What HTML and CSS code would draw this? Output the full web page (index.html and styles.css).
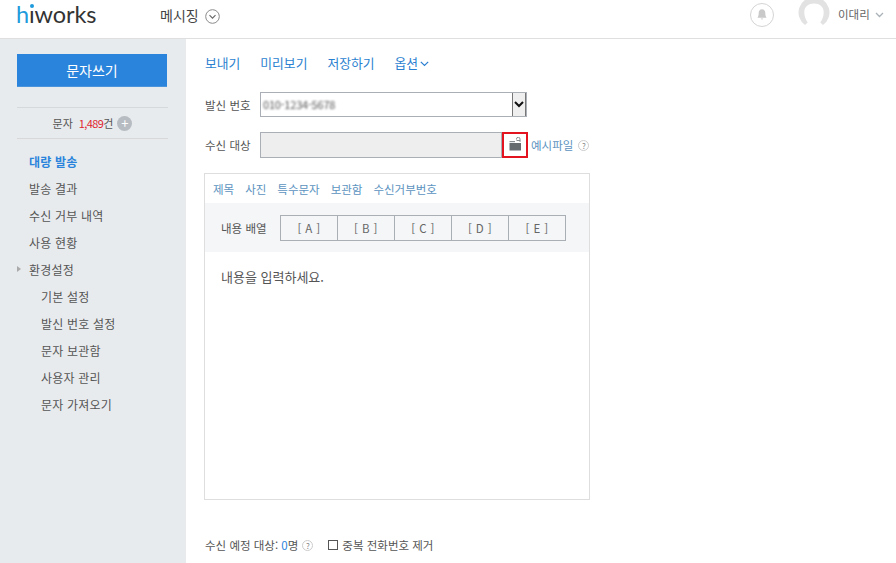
FILE: index.html
```html
<!DOCTYPE html>
<html lang="ko">
<head>
<meta charset="utf-8">
<title>hiworks 메시징</title>
<link rel="stylesheet" href="styles.css">
</head>
<body>
<header class="topbar">
  <div class="logo"><span class="logo-h">h</span><span class="logo-i">ı<i class="logo-dot"></i></span>works</div>
  <div class="app-menu">메시징
    <svg class="app-caret" width="15" height="15" viewBox="0 0 15 15"><circle cx="7.5" cy="7.5" r="6.8" fill="none" stroke="#8a8a8a"/><path d="M4.5 6.2 7.5 9.2 10.5 6.2" fill="none" stroke="#666" stroke-width="1.1"/></svg>
  </div>
  <div class="top-right">
    <span class="bell"><svg width="24" height="24" viewBox="0 0 24 24"><circle cx="12" cy="12" r="11.5" fill="#fff" stroke="#d4d4d4"/><path d="M12 6.2c-2.3 0-3.3 1.8-3.3 3.8 0 2.4-.5 3.6-1.2 4.7h9c-.7-1.100-1.200-2.300-1.200-4.700 0-2-1-3.800-3.300-3.800zM10.700 15.600a1.400 1.400 0 0 0 2.600 0z" fill="#c9c9c9"/></svg></span>
    <span class="avatar"><svg width="32" height="38" viewBox="0 0 32 38"><path d="M16 -3a15.500 15.500 0 0 1 9 28.100l-2.700-2.700c2.300-3 3.400-6.400 3.400-10.400 0-5.500-4.300-8.500-9.700-8.500s-9.700 3-9.700 8.500c0 4 1.100 7.400 3.400 10.400L7 25.100A15.500 15.500 0 0 1 16-3z" fill="#e2e2e2"/></svg></span>
    <span class="user">이대리</span>
    <svg class="user-caret" width="9" height="6" viewBox="0 0 9 6"><path d="M1 1 4.500 4.500 8 1" fill="none" stroke="#a9b2b8" stroke-width="1.300"/></svg>
  </div>
</header>
<div class="shell">
  <aside class="sidebar">
    <button class="compose">문자쓰기</button>
    <div class="quota">문자 <span class="quota-num">1,489</span>건<span class="plus">+</span></div>
    <nav class="nav">
      <a class="nav-item is-active">대량 발송</a>
      <a class="nav-item">발송 결과</a>
      <a class="nav-item">수신 거부 내역</a>
      <a class="nav-item">사용 현황</a>
      <a class="nav-item has-arrow">환경설정</a>
      <a class="nav-item sub">기본 설정</a>
      <a class="nav-item sub">발신 번호 설정</a>
      <a class="nav-item sub">문자 보관함</a>
      <a class="nav-item sub">사용자 관리</a>
      <a class="nav-item sub">문자 가져오기</a>
    </nav>
  </aside>
  <main class="main">
    <div class="actions">
      <a>보내기</a><a>미리보기</a><a>저장하기</a>
      <a class="options">옵션<svg width="9" height="6" viewBox="0 0 9 6"><path d="M.8.8 4.500 4.500 8.200.8" fill="none" stroke="#2b7fd0" stroke-width="1.200"/></svg></a>
    </div>
    <div class="row row-sender">
      <label class="row-label">발신 번호</label>
      <div class="select">
        <span class="select-value">010-1234-5678</span>
        <span class="select-btn"><svg width="10" height="7" viewBox="0 0 10 7"><path d="M1 1 5 5 9 1" fill="none" stroke="#111" stroke-width="2"/></svg></span>
      </div>
    </div>
    <div class="row row-target">
      <label class="row-label">수신 대상</label>
      <div class="target-input"></div>
      <button class="file-btn"><svg class="file-icon" width="13" height="14" viewBox="0 0 13 14"><path d="M.5 6h11.500v7.500H.5z" fill="#666b70"/><path d="M.5 4h5.500v1.200H.5z" fill="#8a8f93"/><path d="M7.500 3.500h3.500V5" fill="none" stroke="#8a8f93"/><path d="M7.500 2.500V2A1.700 1.700 0 0 1 11 2v2" fill="none" stroke="#8a8f93"/></svg></button>
      <a class="sample">예시파일</a>
      <span class="help">?</span>
    </div>
    <section class="editor">
      <div class="tabs"><a>제목</a><a>사진</a><a>특수문자</a><a>보관함</a><a>수신거부번호</a></div>
      <div class="arrange">
        <span class="arrange-label">내용 배열</span>
        <div class="arrange-btns"><span>[ A ]</span><span>[ B ]</span><span>[ C ]</span><span>[ D ]</span><span>[ E ]</span></div>
      </div>
      <div class="editor-body">내용을 입력하세요.</div>
    </section>
    <div class="footer-row">
      <span>수신 예정 대상: <b class="count">0</b>명</span>
      <span class="help">?</span>
      <span class="check"></span>
      <span>중복 전화번호 제거</span>
    </div>
  </main>
</div>
</body>
</html>
```
FILE: styles.css
```css
* { box-sizing: border-box; }
html, body { margin: 0; height: 563px; overflow: hidden; }
body { font-family: "Noto Sans CJK KR", "Noto Sans", sans-serif; font-size: 11.5px; color: #555; background: #fff; }
a { color: inherit; text-decoration: none; }

.topbar { height: 39px; border-bottom: 1px solid #dfdfdf; display: flex; align-items: flex-start; padding-left: 16px; }
.logo { font-family: "Lato", sans-serif; font-size: 23.5px; line-height: 26px; height: 26px; color: #333; margin-top: 1px; width: 144px; letter-spacing: -.1px; }
.logo-h { color: #1e9bdc; }
.logo-i { position: relative; display: inline-block; }
.logo-dot { position: absolute; left: 1px; top: 3px; width: 4px; height: 4px; border-radius: 50%; background: #1e9bdc; }
.app-menu { font-size: 14px; line-height: 20px; margin-top: 5px; color: #444; display: flex; align-items: center; gap: 6px; }
.app-caret { margin-top: 2px; }
.top-right { margin-left: auto; display: flex; align-items: flex-start; height: 38px; overflow: hidden; }
.bell { margin: 3px 0 0; height: 24px; }
.avatar { margin-left: 24px; height: 38px; }
.user { margin: 5px 0 0 8px; line-height: 18px; color: #666; width: 32px; }
.user-caret { margin: 12px 12px 0 5px; }

.shell { display: flex; height: 524px; }
.sidebar { width: 186px; background: #e8ebee; padding: 15px 18px 0 17px; flex: none; }
.compose { display: block; width: 150px; height: 33px; border: 0; border-bottom: 1px solid #4a94dc; background: #2a84dc; color: #fff; font: 14px/32px "Noto Sans CJK KR", sans-serif; padding: 0; }
.quota { margin-top: 20px; height: 32px; border-top: 1px solid #d6d8da; border-bottom: 1px solid #d6d8da; display: flex; align-items: center; justify-content: center; gap: 0; line-height: 30px; white-space: pre; font-size: 11px; }
.quota-num { color: #e01f2f; margin-left: 3px; letter-spacing: -.6px; }
.plus { width: 15px; height: 15px; border-radius: 50%; background: #b7bcc2; color: #fff; margin-left: 4px; font-size: 13px; line-height: 14px; text-align: center; }
.nav { margin-top: 9px; margin-left: -17px; font-size: 12px; letter-spacing: .2px; }
.nav-item { display: block; height: 27px; line-height: 27px; padding-left: 29px; position: relative; }
.nav-item.is-active { color: #2a84dc; font-weight: 700; }
.nav-item.sub { padding-left: 41px; }
.has-arrow::before { content: ""; position: absolute; left: 17px; top: 10px; border-left: 4px solid #aaa; border-top: 3px solid transparent; border-bottom: 3px solid transparent; }

.main { flex: 1; padding: 15px 0 0 19px; }
.actions { display: flex; gap: 20px; font-size: 12.8px; line-height: 17px; color: #2b7fd0; }
.options { display: flex; align-items: center; gap: 2px; }
.options svg { margin-top: 3px; }
.row { display: flex; align-items: center; }
.row-label { width: 55px; flex: none; }
.row-sender { margin-top: 21px; height: 25px; }
.select { width: 267px; height: 25px; border: 1px solid #a9afb5; display: flex; justify-content: space-between; }
.select-value { padding-left: 2px; line-height: 22px; color: #555; filter: blur(1px); letter-spacing: -.2px; font-size: 11px; }
.select-btn { width: 14px; background: #efefef; border-left: 1px solid #777; border-right: 1px solid #777; display: flex; align-items: center; justify-content: center; }
.row-target { margin-top: 15px; height: 26px; }
.target-input { width: 242px; height: 26px; background: #eee; border: 1px solid #a9afb5; }
.file-btn { width: 26px; height: 26px; padding: 0; border: 2px solid #e3131f; background: #fff; display: flex; align-items: center; justify-content: center; }
.file-icon { margin-top: -3px; }
.sample { margin-left: 3px; color: #5c93c0; }
.row-target .help { margin-left: 5px; }
.help { display: inline-block; width: 11px; height: 11px; border: 1px solid #ccc; border-radius: 50%; font-size: 8px; line-height: 9px; text-align: center; color: #888; }

.editor { margin: 15px 0 0 -1px; width: 386px; height: 327px; border: 1px solid #dedede; display: flex; flex-direction: column; }
.tabs { height: 29px; display: flex; gap: 11px; padding-left: 8px; line-height: 30px; color: #5c93c0; flex: none; }
.arrange { height: 49px; background: #f4f6f8; display: flex; align-items: center; flex: none; padding-left: 16px; }
.arrange-label { width: 59px; flex: none; }
.arrange-btns { display: flex; height: 26px; border: 1px solid #a9afb5; }
.arrange-btns span { width: 57px; text-align: center; line-height: 24px; border-left: 1px solid #a9afb5; color: #666; letter-spacing: .4px; }
.arrange-btns span:first-child { border-left: 0; width: 56px; }
.editor-body { padding: 0 16px; margin-top: 16px; font-size: 13px; line-height: 18px; color: #555; }

.footer-row { margin-top: 36px; display: flex; align-items: center; line-height: 18px; }
.footer-row .help { margin-left: 4px; }
.count { color: #2b84dc; font-weight: 400; }
.check { width: 10px; height: 10px; border: 1px solid #555; margin: 0 4px 0 15px; }
```
